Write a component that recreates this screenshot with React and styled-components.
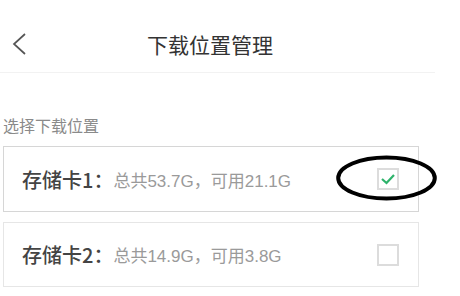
import styled, { createGlobalStyle } from 'styled-components';

const GlobalStyle = createGlobalStyle`
  body {
    margin: 0;
    background: #fff;
    font-family: "Noto Sans CJK SC", "Noto Sans", sans-serif;
  }
`;

const Page = styled.div`
  width: 460px;
  height: 296px;
  overflow: hidden;
`;

const Header = styled.header`
  box-sizing: border-box;
  width: 435px;
  height: 73px;
  padding: 16px 15px 0 0;
  border-bottom: 1px solid #f2f2f2;
  display: grid;
  grid-template-columns: 60px 1fr 60px;
  align-items: center;
`;

const BackButton = styled.button`
  background: none;
  border: none;
  padding: 0 0 0 11px;
  display: flex;
  align-items: center;
  cursor: pointer;
`;

const Title = styled.h1`
  margin: 0;
  text-align: center;
  font-size: 21px;
  font-weight: 400;
  color: #333;
  line-height: 24px;
`;

const Section = styled.section`
  padding: 42px 0 0 3px;
  display: flex;
  flex-direction: column;
  gap: 10px;
`;

const SectionLabel = styled.div`
  font-size: 16px;
  line-height: 20px;
  color: #8a8a8a;
  margin-bottom: 1px;
`;

const Card = styled.div`
  position: relative;
  box-sizing: border-box;
  width: 416px;
  height: ${(p) => p.$height}px;
  border: 1px solid ${(p) => (p.$active ? '#d6d6d6' : '#e6e6e6')};
  padding: 0 19px 0 18px;
  display: flex;
  align-items: center;
`;

const CardName = styled.span`
  font-size: 20px;
  font-weight: 500;
  color: #444;
`;

const CardInfo = styled.span`
  flex: 1;
  font-family: "Liberation Sans", "Noto Sans CJK SC", sans-serif;
  font-size: 17px;
  color: #9a9a9a;
`;

const Box = styled.span`
  box-sizing: border-box;
  width: 22px;
  height: 22px;
  border: 2px solid #dcdcdc;
  display: flex;
  align-items: center;
  justify-content: center;
`;

const Ring = styled.svg`
  position: absolute;
  left: 332px;
  top: 8px;
`;

const cards = [
  { name: '存储卡1：', info: '总共53.7G，可用21.1G', checked: true, height: 66 },
  { name: '存储卡2：', info: '总共14.9G，可用3.8G', checked: false, height: 65 },
];

const App = () => (
  <Page>
    <GlobalStyle />
    <Header>
      <BackButton aria-label="back">
        <svg width="16" height="24" viewBox="0 0 16 24">
          <path d="M14 2 L3 12 L14 22" fill="none" stroke="#555" strokeWidth="1.7" />
        </svg>
      </BackButton>
      <Title>下载位置管理</Title>
      <span />
    </Header>
    <Section>
      <SectionLabel>选择下载位置</SectionLabel>
      {cards.map((c) => (
        <Card key={c.name} $active={c.checked} $height={c.height}>
          <CardName>{c.name}</CardName>
          <CardInfo>{c.info}</CardInfo>
          <Box>
            {c.checked && (
              <svg width="16" height="14" viewBox="0 0 16 14">
                <path d="M2 7 L6.5 11 L14 3" fill="none" stroke="#2eb36b" strokeWidth="2.2" />
              </svg>
            )}
          </Box>
          {c.checked && (
            <Ring width="101" height="46" viewBox="0 0 101 46">
              <ellipse cx="50.5" cy="23" rx="48.3" ry="20.5" fill="none" stroke="#000" strokeWidth="4" />
            </Ring>
          )}
        </Card>
      ))}
    </Section>
  </Page>
);

export default App;
